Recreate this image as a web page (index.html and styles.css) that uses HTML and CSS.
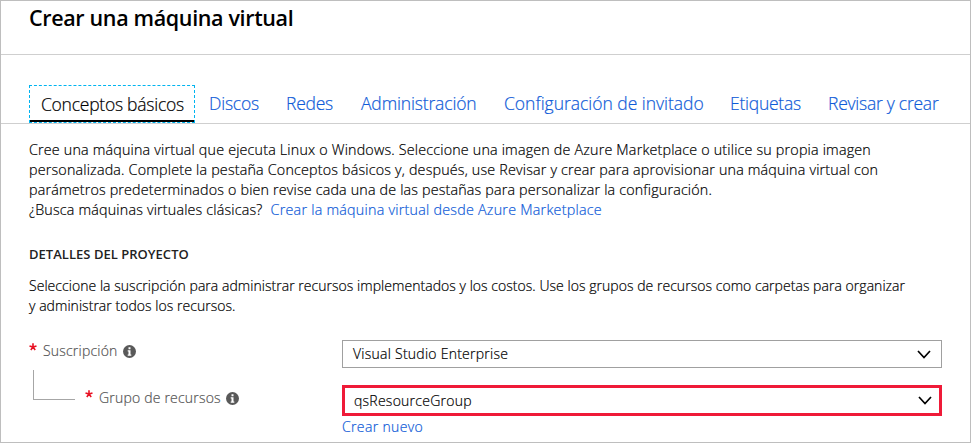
FILE: index.html
```html
<!DOCTYPE html>
<html lang="es">
<head>
<meta charset="utf-8">
<title>Crear una máquina virtual</title>
<link rel="stylesheet" href="styles.css">
</head>
<body>
<main class="blade">
  <header class="header"><h1 class="title"><span>Crear una máquina virtual</span></h1></header>
  <nav class="tabs">
    <a class="tab tab-active"><span>Conceptos básicos</span></a>
    <a class="tab tab-discos"><span>Discos</span></a>
    <a class="tab tab-redes"><span>Redes</span></a>
    <a class="tab tab-admin"><span>Administración</span></a>
    <a class="tab tab-config"><span>Configuración de invitado</span></a>
    <a class="tab tab-etiquetas"><span>Etiquetas</span></a>
    <a class="tab tab-revisar"><span>Revisar y crear</span></a>
  </nav>
  <section class="intro">
    <div class="line l1">Cree una máquina virtual que ejecuta Linux o Windows. Seleccione una imagen de Azure Marketplace o utilice su propia imagen</div>
    <div class="line l2">personalizada. Complete la pestaña Conceptos básicos y, después, use Revisar y crear para aprovisionar una máquina virtual con</div>
    <div class="line l3">parámetros predeterminados o bien revise cada una de las pestañas para personalizar la configuración.</div>
    <div class="line l4"><span>¿Busca máquinas virtuales clásicas?</span><a class="link classic">Crear la máquina virtual desde Azure Marketplace</a></div>
  </section>
  <section class="project">
    <h2 class="subtitle">DETALLES DEL PROYECTO</h2>
    <div class="line l5">Seleccione la suscripción para administrar recursos implementados y los costos. Use los grupos de recursos como carpetas para organizar</div>
    <div class="line l6">y administrar todos los recursos.</div>
  </section>
  <form class="form">
    <div class="labels">
      <div class="label">
        <svg class="star" viewBox="0 0 8 8"><path d="M4 4V.3M4 4L.5 2.9M4 4L7.5 2.9M4 4L1.8 7M4 4L6.2 7"/></svg>
        <span class="label-text sus">Suscripción</span>
        <svg class="info" viewBox="0 0 13 13"><circle cx="6.5" cy="6.5" r="6.5"/><path d="M5.5 2.2h2v2h-2zM4.7 5.2h2.8v4.3h.8v1.2H4.7V9.500h.8V6.400h-.8z"/></svg>
      </div>
      <div class="label label-child">
        <span class="branch"></span>
        <svg class="star" viewBox="0 0 8 8"><path d="M4 4V.3M4 4L.5 2.9M4 4L7.5 2.9M4 4L1.8 7M4 4L6.2 7"/></svg>
        <span class="label-text grp">Grupo de recursos</span>
        <svg class="info" viewBox="0 0 13 13"><circle cx="6.5" cy="6.5" r="6.5"/><path d="M5.5 2.2h2v2h-2zM4.7 5.2h2.8v4.3h.8v1.2H4.7V9.500h.8V6.400h-.8z"/></svg>
      </div>
    </div>
    <div class="fields">
      <div class="select"><span class="vs">Visual Studio Enterprise</span><svg class="chevron" viewBox="0 0 14 9"><path d="M1 1l6 6.500L13 1"/></svg></div>
      <div class="select select-marked"><span class="qs">qsResourceGroup</span><svg class="chevron" viewBox="0 0 14 9"><path d="M1 1l6 6.500L13 1"/></svg></div>
      <a class="link new">Crear nuevo</a>
    </div>
  </form>
</main>
</body>
</html>
```
FILE: styles.css
```css
* { box-sizing: border-box; }
body { margin: 0; font-family: "Open Sans", "Noto Sans", sans-serif; font-size: 14px; font-weight: 300; -webkit-text-stroke: 0.2px; color: #000; background: #fff; }
.blade { width: 971px; height: 443px; border: 1px solid #bebebe; overflow: hidden; }
.header { height: 54px; padding: 2px 0 0 28px; border-bottom: 1px solid #cfcfcf; }
.title { margin: 0; font-size: 21.5px; line-height: 30px; font-weight: 600; -webkit-text-stroke: 0; letter-spacing: -0.35px; white-space: nowrap; }
.tabs { display: flex; height: 69px; padding: 30px 0 0 28px; border-bottom: 1px solid #cfcfcf; font-size: 17.5px; line-height: 37px; letter-spacing: -0.25px; white-space: nowrap; }
.tab { flex: none; color: #0f5bd8; }
.tab-active { width: 166px; height: 38px; padding-left: 11px; border: 1px dashed #00b4f0; box-shadow: inset 0 -2px #000; line-height: 36px; color: #000; }
.tab-discos { width: 77px; margin-left: 14px; letter-spacing: -0.2px; }
.tab-redes { width: 75px; }
.tab-admin { width: 143px; letter-spacing: -0.15px; }
.tab-config { width: 226px; letter-spacing: -0.02px; }
.tab-etiquetas { width: 98px; }
.intro { padding: 16px 0 0 28px; font-size: 14.3px; letter-spacing: 0.185px; }
.line { height: 20px; line-height: 20px; white-space: nowrap; width: max-content; }
.l3 { letter-spacing: 0.17px; }
.l4 { display: flex; gap: 8px; }
.link { color: #0f5bd8; }
.classic { letter-spacing: 0.24px; }
.project { padding: 25px 0 0 28px; letter-spacing: 0.04px; }
.subtitle { margin: 0 0 11px; height: 20px; line-height: 18px; font-size: 13px; font-weight: 600; -webkit-text-stroke: 0; letter-spacing: 0.03px; color: #222; width: max-content; }
.form { display: flex; padding: 24px 0 0 28px; }
.labels { width: 313px; }
.label { display: flex; height: 20px; line-height: 21px; color: #555; white-space: nowrap; letter-spacing: 0.2px; }
.label-child { margin-top: 27px; }
.branch { width: 42px; height: 30px; margin: -17px 10px 0 4px; border: solid #a6a6a6; border-width: 0 0 1px 1px; }
.star { flex: none; width: 8px; height: 8px; margin: 3px 6px 0 0; fill: none; stroke: #e81123; stroke-width: 1.6; }
.label-text { width: 75px; }
.grp { width: 122px; }
.info { flex: none; width: 13px; height: 13px; margin: 5px 0 0 5px; fill: #595959; }
.info path { fill: #fff; }
.fields { width: 600px; letter-spacing: 0.25px; }
.select { display: flex; justify-content: space-between; height: 28px; padding: 0 11px 0 10px; border: 1px solid #a0a0a0; line-height: 26px; white-space: nowrap; }
.select-marked { height: 31px; margin-top: 17px; padding: 0 7px 0 9px; border: 3px solid #ef1a38; line-height: 25px; }
.chevron { width: 14px; height: 9px; margin: 9px -1px 0 0; fill: none; stroke: #000; stroke-width: 1.7; }
.select-marked .chevron { margin: 8px 0 0; }
.new { display: block; width: max-content; height: 20px; line-height: 20px; margin-top: 1px; letter-spacing: 0.35px; }
```
